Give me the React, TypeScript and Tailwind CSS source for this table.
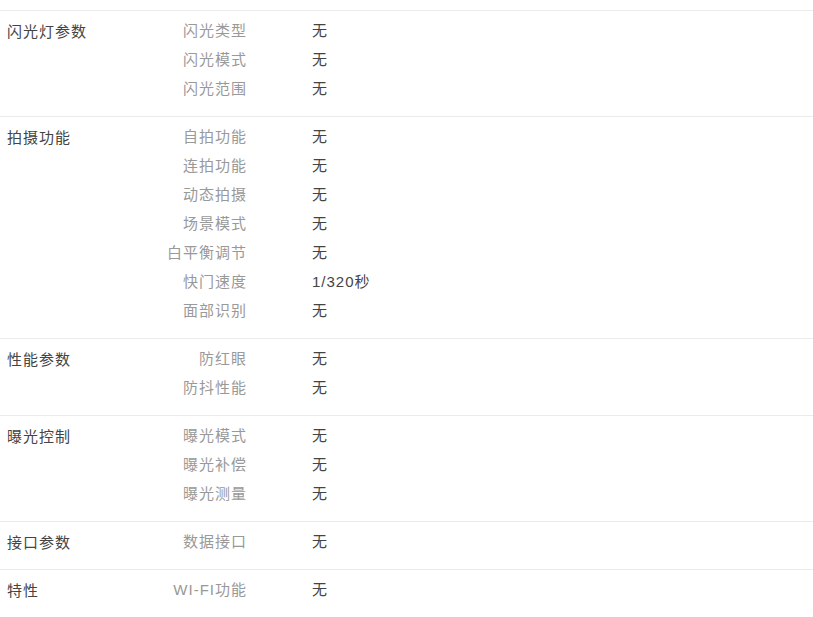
const groups: { title: string; items: [string, string][] }[] = [
  {
    title: "闪光灯参数",
    items: [
      ["闪光类型", "无"],
      ["闪光模式", "无"],
      ["闪光范围", "无"],
    ],
  },
  {
    title: "拍摄功能",
    items: [
      ["自拍功能", "无"],
      ["连拍功能", "无"],
      ["动态拍摄", "无"],
      ["场景模式", "无"],
      ["白平衡调节", "无"],
      ["快门速度", "1/320秒"],
      ["面部识别", "无"],
    ],
  },
  {
    title: "性能参数",
    items: [
      ["防红眼", "无"],
      ["防抖性能", "无"],
    ],
  },
  {
    title: "曝光控制",
    items: [
      ["曝光模式", "无"],
      ["曝光补偿", "无"],
      ["曝光测量", "无"],
    ],
  },
  {
    title: "接口参数",
    items: [["数据接口", "无"]],
  },
  {
    title: "特性",
    items: [["WI-FI功能", "无"]],
  },
];

const App = () => {
  return (
    <div className="w-[813px] h-[617px] overflow-hidden bg-white pt-[10px] text-[15px] tracking-[1px] font-['Liberation_Sans','Noto_Sans_CJK_SC',sans-serif]">
      {groups.map((g) => (
        <div key={g.title} className="flex border-t border-[#ebebeb] pt-[6px] pb-[12px]">
          <div className="w-[140px] pl-[7px] leading-[29px] text-[#444]">{g.title}</div>
          <div className="flex-1">
            {g.items.map(([label, value]) => (
              <div key={label} className="flex h-[29px] items-center">
                <span className="w-[107px] text-right text-[#999]">{label}</span>
                <span className="pl-[65px] text-[#444]">{value}</span>
              </div>
            ))}
          </div>
        </div>
      ))}
    </div>
  );
};

export default App;
